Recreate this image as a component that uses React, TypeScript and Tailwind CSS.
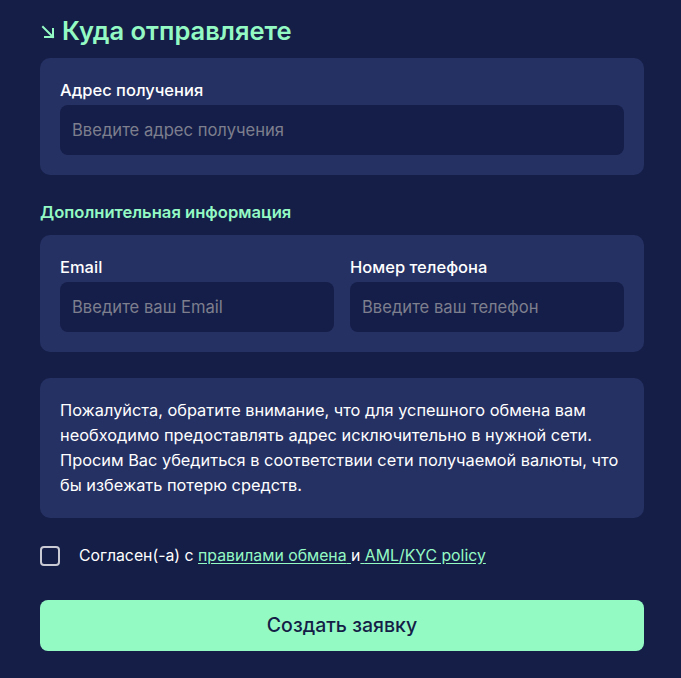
import { useState } from "react";

function Field({ label, placeholder }: { label: string; placeholder: string }) {
  return (
    <div className="flex flex-col gap-[5px] flex-1 min-w-0">
      <label className="text-[16.5px] leading-[20px] font-medium text-white">{label}</label>
      <input
        placeholder={placeholder}
        className="h-[50px] w-full rounded-[8px] bg-[#151e48] px-3 text-[16.6px] text-white placeholder:text-[#7d7f8e] outline-none"
      />
    </div>
  );
}

export default function App() {
  const [agree, setAgree] = useState(false);

  return (
    <div
      className="min-h-[678px] w-full bg-[#141e47] pl-10 pr-[37px] pt-[15px] pb-6"
      style={{ fontFamily: "Inter, 'Noto Sans', sans-serif" }}
    >
      {/* title */}
      <h2 className="flex items-center gap-[6px] text-[25.5px] leading-[32px] font-semibold text-[#94fac4]">
        <svg width="16" height="16" viewBox="0 0 16 16" fill="none" className="mt-[2px]">
          <path d="M3 3 L13 13 M13 5 V13 H5" stroke="#94fac4" strokeWidth="2" strokeLinecap="square" />
        </svg>
        Куда отправляете
      </h2>

      <div className="mt-[11px] rounded-[10px] bg-[#263163] px-5 pt-[22px] pb-[20px]">
        <Field label="Адрес получения" placeholder="Введите адрес получения" />
      </div>

      <h3 className="mt-[27px] text-[16.6px] leading-[20px] font-semibold text-[#94fac4]">
        Дополнительная информация
      </h3>

      <div className="mt-[13px] flex gap-4 rounded-[10px] bg-[#263163] px-5 pt-[22px] pb-[20px]">
        <Field label="Email" placeholder="Введите ваш Email" />
        <Field label="Номер телефона" placeholder="Введите ваш телефон" />
      </div>

      <div className="mt-[26px] rounded-[10px] bg-[#263163] px-5 pt-[20px] pb-[20px]">
        <p className="text-[16.35px] leading-[25px] text-white">
          Пожалуйста, обратите внимание, что для успешного обмена вам необходимо предоставлять адрес
          исключительно в нужной сети. Просим Вас убедиться в соответствии сети получаемой валюты, что
          бы избежать потерю средств.
        </p>
      </div>

      <label className="mt-[28px] flex items-center gap-[19px] cursor-pointer">
        <input
          type="checkbox"
          checked={agree}
          onChange={(e) => setAgree(e.target.checked)}
          className="size-[20px] shrink-0 appearance-none rounded-[4px] border-2 border-[#c9cad3] bg-transparent checked:bg-[#94fac4]"
        />
        <span className="text-[15.8px] leading-[20px] text-white">
          Согласен(-а) с{" "}
          <a href="#" className="text-[#94fac4] underline underline-offset-2">
            правилами обмена{" "}
          </a>
          и
          <a href="#" className="text-[#94fac4] underline underline-offset-2">
            {" "}AML/KYC policy
          </a>
        </span>
      </label>

      <button className="mt-[34px] h-[51px] w-full rounded-[8px] bg-[#94fac4] text-[19.5px] font-medium text-[#141e47]">
        Создать заявку
      </button>
    </div>
  );
}
